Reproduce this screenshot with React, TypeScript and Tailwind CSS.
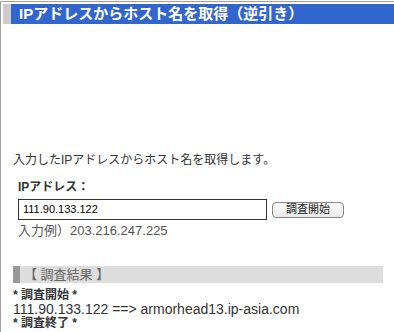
export default function App() {
  const font = { fontFamily: '"Liberation Sans", "Noto Sans CJK JP", sans-serif' };
  return (
    <div className="w-[394px] h-[332px] overflow-hidden bg-white pt-px" style={font}>
      <div className="h-[331px] border-l border-t border-[#a0a0a0]">
        <div className="mt-[2px] ml-[2px] flex h-[20px]">
          <div className="w-[8px] bg-[#cccccc]" />
          <div className="flex-1 bg-[#3366cc] pl-[8px] text-[15px] font-bold leading-[20px] text-white whitespace-nowrap">
            IPアドレスからホスト名を取得（逆引き）
          </div>
        </div>

        <p className="mt-[128px] ml-[12px] text-[12px] leading-[16px] text-[#333]">
          入力したIPアドレスからホスト名を取得します。
        </p>

        <div className="ml-[17px] mt-[11px]">
          <div className="text-[12px] font-bold leading-[16px] text-[#333]">IPアドレス：</div>
          <div className="mt-[4px] flex h-[21px] items-center">
            <div className="flex h-[21px] w-[249px] items-center border border-[#333] pl-[4px] text-[11px] text-black">
              111.90.133.122
            </div>
            <button className="ml-[5px] flex h-[16px] w-[72px] items-center justify-center rounded-[4px] border border-[#888] bg-gradient-to-b from-white to-[#e8e8e8] text-[11px] leading-none text-[#222]">
              調査開始
            </button>
          </div>
          <div className="mt-[3px] text-[13px] leading-[16px] text-[#555]">入力例）203.216.247.225</div>
        </div>

        <div className="ml-[12px] mt-[27px] flex h-[17px] w-[370px] bg-[#dddddd]">
          <div className="w-[7px] bg-[#999]" />
          <div className="pl-[4px] text-[13px] leading-[17px] text-[#666]">【 調査結果 】</div>
        </div>

        <div className="ml-[12px] mt-[5px] text-[#333]">
          <div className="text-[12px] font-bold leading-[14px]">* 調査開始 *</div>
          <div className="text-[14px] leading-[14px]">111.90.133.122 ==&gt; armorhead13.ip-asia.com</div>
          <div className="text-[12px] font-bold leading-[14px]">* 調査終了 *</div>
        </div>
      </div>
    </div>
  );
}
